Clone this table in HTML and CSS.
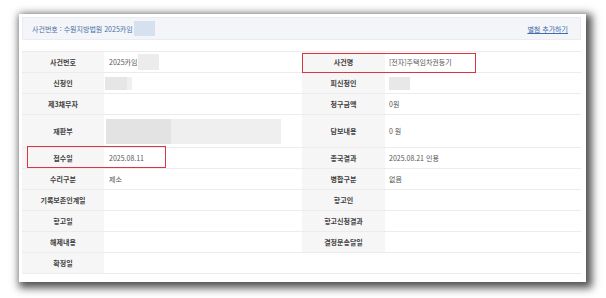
FILE: index.html
```html
<!DOCTYPE html>
<html lang="ko">
<head>
<meta charset="utf-8">
<link rel="stylesheet" href="styles.css">
</head>
<body>
<div class="card">
  <div class="head">
    <div class="title">사건번호 : 수원지방법원 2025카임<span class="mask mask-blue"></span></div>
    <a class="link" href="#">별첨 추가하기</a>
  </div>
  <div class="grid">
    <div class="row">
      <div class="lbl">사건번호</div><div class="val">2025카임<span class="mask mask-num"></span></div>
      <div class="lbl">사건명</div><div class="val">[전자]주택임차권등기</div>
    </div>
    <div class="row">
      <div class="lbl">신청인</div><div class="val"><span class="mask mask-name"></span></div>
      <div class="lbl">피신청인</div><div class="val"><span class="mask mask-name2"></span></div>
    </div>
    <div class="row">
      <div class="lbl">제3채무자</div><div class="val"></div>
      <div class="lbl">청구금액</div><div class="val">0원</div>
    </div>
    <div class="row tall">
      <div class="lbl">재판부</div><div class="val"><span class="mask mask-court"><span class="dark"></span></span></div>
      <div class="lbl">담보내용</div><div class="val">0 원</div>
    </div>
    <div class="row">
      <div class="lbl">접수일</div><div class="val">2025.08.11</div>
      <div class="lbl">종국결과</div><div class="val">2025.08.21 인용</div>
    </div>
    <div class="row">
      <div class="lbl">수리구분</div><div class="val">제소</div>
      <div class="lbl">병합구분</div><div class="val">없음</div>
    </div>
    <div class="row">
      <div class="lbl">기록보존인계일</div><div class="val"></div>
      <div class="lbl">항고인</div><div class="val"></div>
    </div>
    <div class="row">
      <div class="lbl">항고일</div><div class="val"></div>
      <div class="lbl">항고신청결과</div><div class="val"></div>
    </div>
    <div class="row">
      <div class="lbl">해제내용</div><div class="val"></div>
      <div class="lbl">결정문송달일</div><div class="val"></div>
    </div>
    <div class="row">
      <div class="lbl">확정일</div><div class="val span3"></div>
    </div>
    <div class="mark mark-name"></div>
    <div class="mark mark-date"></div>
  </div>
</div>
</body>
</html>
```

FILE: styles.css
```css
* { box-sizing: border-box; }
html, body { margin: 0; padding: 0; background: #fff; }
body {
  width: 606px;
  height: 298px;
  overflow: hidden;
  font-family: "Noto Sans CJK KR", "Noto Sans", sans-serif;
  font-size: 7px;
  color: #555;
  padding: 14px 0 0 19px;
}
.card {
  width: 567px;
  height: 268px;
  background: #fff;
  box-shadow: 3px 3px 8px 3px rgba(0, 0, 0, 0.68);
  padding: 3px 5px 0 3px;
}
.head {
  height: 23px;
  background: #f3f5f8;
  border: 1px solid #e9ecf1;
  display: flex;
  align-items: center;
  justify-content: space-between;
  padding: 0 12px 0 9px;
}
.title {
  color: #456fa8;
  display: flex;
  align-items: center;
}
.link {
  color: #3f6db0;
  text-decoration: underline;
}
.mask { display: inline-block; vertical-align: middle; }
.mask-blue { width: 21px; height: 15px; background: #d6e0ef; margin-left: 1px; }
.mask-num { width: 21px; height: 16px; background: #ececec; margin-left: 1px; }
.mask-name { width: 22px; height: 13px; background: #e6e6e6; margin-left: -4px; box-shadow: 5px 0 0 #f0f0f0; }
.mask-name2 { width: 21px; height: 13px; background: #e8e8e8; }
.mask-court { width: 175px; height: 25px; background: #efefef; margin-left: -3px; position: relative; }
.mask-court .dark { display: block; width: 65px; height: 100%; background: #e3e3e3; }
.grid {
  margin-top: 11px;
  border-top: 1px solid #ececec;
  position: relative;
}
.row {
  display: grid;
  grid-template-columns: 82px 198px 83px 1fr;
  height: 21px;
  border-bottom: 1px solid #ececec;
}
.row.tall { height: 33px; }
.lbl {
  background: #f6f6f6;
  color: #3f3f3f;
  font-weight: 700;
  display: flex;
  align-items: center;
  justify-content: center;
}
.val {
  display: flex;
  align-items: center;
  padding-left: 5px;
  color: #555;
}
.row > .val:nth-child(4) { padding-left: 4px; }
.span3 { grid-column: 2 / 5; }
.mark {
  position: absolute;
  border: 1.5px solid #dc3542;
}
.mark-name { left: 280px; top: 1px; width: 174px; height: 20px; }
.mark-date { left: 5px; top: 94px; width: 139px; height: 22px; }
```
